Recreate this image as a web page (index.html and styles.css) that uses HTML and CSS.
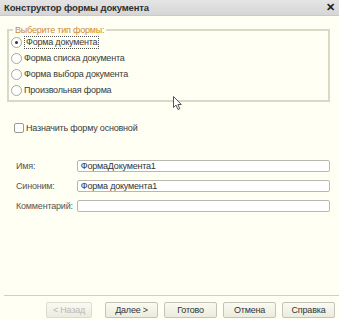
FILE: index.html
```html
<!DOCTYPE html>
<html lang="ru">
  <head>
    <meta charset="UTF-8" />
    <title>Конструктор формы документа</title>
    <link rel="stylesheet" href="styles.css">
  </head>
  <body>
    <div class="window">
      <div class="titlebar">
        <span class="title">Конструктор формы документа</span>
        <span class="close">✕</span>
      </div>

      <div class="content">
        <fieldset class="group">
          <legend>Выберите тип формы:</legend>
          <label class="radio"><span class="dot checked"></span><span class="focus">Форма документа</span></label>
          <label class="radio"><span class="dot"></span><span>Форма списка документа</span></label>
          <label class="radio"><span class="dot"></span><span>Форма выбора документа</span></label>
          <label class="radio"><span class="dot"></span><span>Произвольная форма</span></label>
        </fieldset>

        <label class="check"><span class="box"></span>Назначить форму основной</label>

        <div class="fields">
          <div class="row">
            <span class="name">Имя:</span>
            <div class="input">ФормаДокумента1</div>
          </div>
          <div class="row">
            <span class="name">Синоним:</span>
            <div class="input">Форма документа1</div>
          </div>
          <div class="row">
            <span class="name">Комментарий:</span>
            <div class="input"></div>
          </div>
        </div>
      </div>

      <div class="footer">
        <button class="btn disabled">&lt; Назад</button>
        <button class="btn next">Далее &gt;</button>
        <button class="btn">Готово</button>
        <button class="btn">Отмена</button>
        <button class="btn">Справка</button>
      </div>

      <!-- курсор мыши -->
      <svg class="cursor" width="10" height="15" viewBox="0 0 10 15">
        <path d="M0.5 0.5 L0.5 11.5 L3 9 L5 13.5 L6.8 12.7 L4.9 8.5 L8.3 8.5 Z" fill="#fff" stroke="#555" stroke-width="1"/>
      </svg>
    </div>
  </body>
</html>
```

FILE: styles.css
```css
* {
  box-sizing: border-box;
  margin: 0;
  padding: 0;
}
body {
  width: 339px;
  height: 319px;
  background-color: #fffff3;
  font-family: "Liberation Sans", Arial, sans-serif;
  font-size: 9px;
  letter-spacing: -0.2px;
  color: #3a3a3a;
  overflow: hidden;
}
.window {
  position: relative;
  height: 319px;
  display: flex;
  flex-direction: column;
}
.titlebar {
  height: 16px;
  display: flex;
  justify-content: space-between;
  align-items: center;
  padding: 0 4px 0 4px;
  background: linear-gradient(#e4e4e4, #d6d6d6);
  border-bottom: 1px solid #cacaca;
}
.title {
  font-weight: bold;
  color: #303030;
  font-size: 9.5px;
  letter-spacing: -0.15px;
}
.close {
  font-size: 11px;
  font-weight: bold;
  color: #222;
}
.content {
  flex: 1;
  padding: 10px 9px 0 7px;
}
.group {
  width: 323px;
  height: 76px;
  border: 2px solid #d9d9c8;
  padding: 0 0 0 2px;
}
.group legend {
  color: #d08832;
  padding: 0 2px;
  margin-left: 2px;
  line-height: 8px;
}
.radio {
  display: flex;
  align-items: center;
  height: 16px;
  gap: 2px;
}
.dot {
  width: 11px;
  height: 11px;
  border: 1px solid #a8a8a0;
  border-radius: 50%;
  background: #fff;
  position: relative;
}
.dot.checked::after {
  content: "";
  position: absolute;
  left: 3px;
  top: 3px;
  width: 3px;
  height: 3px;
  border-radius: 50%;
  background: #333;
}
.focus {
  border: 1px dotted #555;
  padding: 0 1px;
  line-height: 11px;
}
.check {
  display: flex;
  align-items: center;
  gap: 2px;
  margin: 21px 0 0 7px;
}
.box {
  width: 10px;
  height: 10px;
  border: 1px solid #9a9a90;
  border-radius: 2px;
  background: #fff;
}
.fields {
  margin-top: 27px;
  display: flex;
  flex-direction: column;
  gap: 8px;
}
.row {
  display: flex;
  align-items: center;
  padding-left: 9px;
}
.name {
  width: 61px;
  color: #555;
}
.input {
  width: 254px;
  height: 12px;
  border: 1px solid #b8b8b0;
  border-radius: 2px;
  background: #fff;
  padding-left: 3px;
  line-height: 10px;
  color: #333;
}
.footer {
  height: 24px;
  border-top: 1px solid #cfcfc4;
  display: flex;
  justify-content: flex-end;
  gap: 6px;
  padding: 6px 4px 0 0;
  margin: 0 0 0 4px;
}
.btn {
  height: 16px;
  width: 53px;
  font-family: "Liberation Sans", Arial, sans-serif;
  font-size: 9px;
  letter-spacing: -0.2px;
  color: #333;
  background: linear-gradient(#fafaf0, #ecebe0);
  border: 1px solid #c4c4b8;
  border-radius: 2px;
}
.btn.disabled {
  width: 46px;
  margin-right: 7px;
  color: #b8b8b8;
  border-color: #dcdcd2;
}
.cursor {
  position: absolute;
  left: 173px;
  top: 96px;
}
```
